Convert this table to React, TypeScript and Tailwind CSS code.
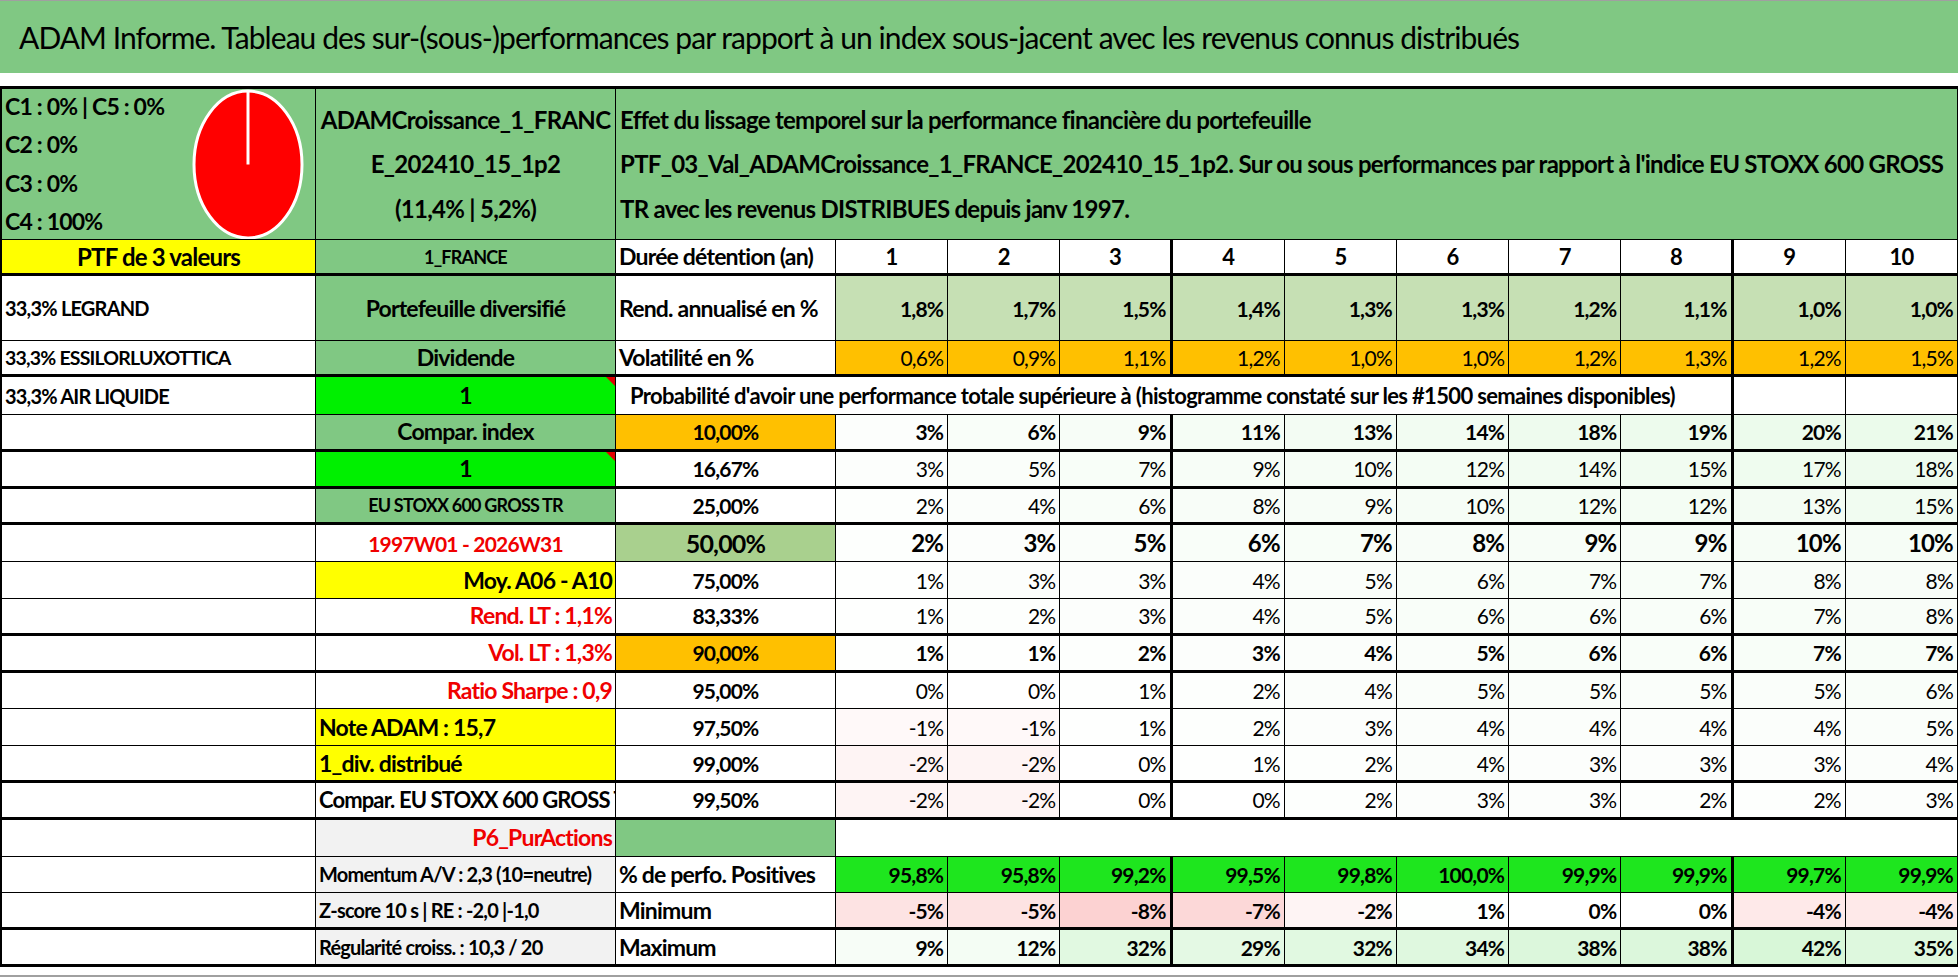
import React from "react";

const years = [1, 2, 3, 4, 5, 6, 7, 8, 9, 10];
const rend = ["1,8%", "1,7%", "1,5%", "1,4%", "1,3%", "1,3%", "1,2%", "1,1%", "1,0%", "1,0%"];
const vol = ["0,6%", "0,9%", "1,1%", "1,2%", "1,0%", "1,0%", "1,2%", "1,3%", "1,2%", "1,5%"];

type ProbRow = {
  seuil: string;
  values: number[];
  bold?: boolean;
  big?: boolean;
  seuilBg?: string;
  left: React.ReactNode;
  leftCls: string;
  thick?: boolean;
};

const green = "bg-[#80c883]";

// light tint from the value, like Excel conditional formatting
function tint(v: number) {
  if (v >= 0) {
    const t = Math.min(v / 45, 1);
    return `rgb(${Math.round(255 - t * 42)},${Math.round(255 - t * 9)},${Math.round(255 - t * 42)})`;
  }
  const t = Math.min(-v / 8, 1);
  return `rgb(${Math.round(255 - t * 3)},${Math.round(255 - t * 45)},${Math.round(255 - t * 45)})`;
}

const probRows: ProbRow[] = [
  { seuil: "10,00%", values: [3, 6, 9, 11, 13, 14, 18, 19, 20, 21], bold: true, seuilBg: "bg-[#ffc000]", left: "Compar. index", leftCls: `${green} justify-center`, thick: true },
  { seuil: "16,67%", values: [3, 5, 7, 9, 10, 12, 14, 15, 17, 18], left: "1", leftCls: "bg-[#00f000] justify-center", thick: true },
  { seuil: "25,00%", values: [2, 4, 6, 8, 9, 10, 12, 12, 13, 15], left: "EU STOXX 600 GROSS TR", leftCls: `${green} justify-center text-[18px]`, thick: true },
  { seuil: "50,00%", values: [2, 3, 5, 6, 7, 8, 9, 9, 10, 10], bold: true, big: true, seuilBg: "bg-[#a9d08e]", left: "1997W01 - 2026W31", leftCls: "justify-center text-[21px] text-[#f00000]" },
  { seuil: "75,00%", values: [1, 3, 3, 4, 5, 6, 7, 7, 8, 8], left: "Moy. A06 - A10", leftCls: "bg-[#ffff00] justify-end pr-[3px]" },
  { seuil: "83,33%", values: [1, 2, 3, 4, 5, 6, 6, 6, 7, 8], left: "Rend. LT : 1,1%", leftCls: "justify-end pr-[3px] text-[#f00000]", thick: true },
  { seuil: "90,00%", values: [1, 1, 2, 3, 4, 5, 6, 6, 7, 7], bold: true, seuilBg: "bg-[#ffc000]", left: "Vol. LT : 1,3%", leftCls: "justify-end pr-[3px] text-[#f00000]", thick: true },
  { seuil: "95,00%", values: [0, 0, 1, 2, 4, 5, 5, 5, 5, 6], left: "Ratio Sharpe : 0,9", leftCls: "justify-end pr-[3px] text-[#f00000]" },
  { seuil: "97,50%", values: [-1, -1, 1, 2, 3, 4, 4, 4, 4, 5], left: "Note ADAM : 15,7", leftCls: "bg-[#ffff00] justify-start pl-[3px]" },
  { seuil: "99,00%", values: [-2, -2, 0, 1, 2, 4, 3, 3, 3, 4], left: "1_div. distribué", leftCls: "bg-[#ffff00] justify-start pl-[3px]", thick: true },
  { seuil: "99,50%", values: [-2, -2, 0, 0, 2, 3, 3, 2, 2, 3], left: "Compar. EU STOXX 600 GROSS TR", leftCls: "justify-start pl-[3px] text-[22px] tracking-[-0.04em]", thick: true },
];

const positives = ["95,8%", "95,8%", "99,2%", "99,5%", "99,8%", "100,0%", "99,9%", "99,9%", "99,7%", "99,9%"];
const minimum = [-5, -5, -8, -7, -2, 1, 0, 0, -4, -4];
const maximum = [9, 12, 32, 29, 32, 34, 38, 38, 42, 35];

const row = "grid grid-cols-[314px_300px_220px_repeat(10,minmax(0,1fr))]";
const cell = "flex items-center overflow-hidden whitespace-nowrap border-r border-black";
// the sheet has a heavier rule after year 3 and year 8
const sep = (i: number) => (i === 2 || i === 7 ? "border-r-[3px]" : "");
const num = "justify-end pr-[4px] text-[21px]";

function Flag() {
  return <span className="absolute right-0 top-0 h-0 w-0 border-l-[9px] border-t-[9px] border-l-transparent border-t-[#e00000]" />;
}

function Pie() {
  return (
    <svg width="112" height="151" viewBox="0 0 112 151" className="shrink-0">
      <ellipse cx="56" cy="75.5" rx="54" ry="73.5" fill="#ff0000" stroke="#ffffff" strokeWidth="3" />
      <line x1="56" y1="2" x2="56" y2="75.5" stroke="#ffffff" strokeWidth="3" />
    </svg>
  );
}

export default function App() {
  return (
    <div className="h-[979px] w-[1958px] overflow-hidden bg-white font-['Lato',sans-serif] text-[23px] font-bold leading-none tracking-[-0.035em] text-black">
      {/* bandeau titre */}
      <div className="border-t border-[#a0a0a0]">
        <div className="flex h-[72px] items-center bg-[#80c883] pl-[19px] text-[30px] font-normal tracking-[-0.031em]">
          ADAM Informe. Tableau des sur-(sous-)performances par rapport à un index sous-jacent avec les revenus connus distribués
        </div>
      </div>
      <div className="h-[13px]" />

      <div className="border-l-2 border-t-[3px] border-black">
        {/* en-tête */}
        <div className={`${row} h-[151px]`}>
          <div className={`${cell} ${green} border-b items-stretch`}>
            <div className="flex flex-col justify-center gap-[15.5px] pl-[3px] text-[23px]">
              <span>C1 : 0% | C5 : 0%</span>
              <span>C2 : 0%</span>
              <span>C3 : 0%</span>
              <span>C4 : 100%</span>
            </div>
            <div className="ml-auto mr-[11px] flex items-center">
              <Pie />
            </div>
          </div>
          <div className={`${cell} ${green} border-b flex-col justify-center gap-[20.5px] text-[24px] tracking-[-0.03em]`}>
            <span>ADAMCroissance_1_FRANC</span>
            <span>E_202410_15_1p2</span>
            <span>(11,4% | 5,2%)</span>
          </div>
          <div className={`${cell} ${green} col-span-11 flex-col items-start justify-center gap-[20.5px] border-b pl-[4px] text-[24px] tracking-[-0.03em]`}>
            <span>Effet du lissage temporel sur la performance financière du portefeuille</span>
            <span>PTF_03_Val_ADAMCroissance_1_FRANCE_202410_15_1p2. Sur ou sous performances par rapport à l'indice EU STOXX 600 GROSS</span>
            <span>TR avec les revenus DISTRIBUES depuis janv 1997.</span>
          </div>
        </div>

        {/* durée */}
        <div className={`${row} h-[36px]`}>
          <div className={`${cell} border-b-[3px] bg-[#ffff00] justify-center text-[24px]`}>PTF de 3 valeurs</div>
          <div className={`${cell} ${green} border-b-[3px] justify-center text-[18px]`}>1_FRANCE</div>
          <div className={`${cell} border-b-[3px] pl-[3px]`}>Durée détention (an)</div>
          {years.map((y, i) => (
            <div key={y} className={`${cell} ${sep(i)} border-b-[3px] justify-center text-[22px]`}>{y}</div>
          ))}
        </div>

        {/* rendement */}
        <div className={`${row} h-[65px]`}>
          <div className={`${cell} border-b pl-[3px] text-[20px]`}>33,3% LEGRAND</div>
          <div className={`${cell} ${green} border-b justify-center`}>Portefeuille diversifié</div>
          <div className={`${cell} border-b pl-[3px]`}>Rend. annualisé en %</div>
          {rend.map((v, i) => (
            <div key={i} className={`${cell} ${sep(i)} ${num} border-b bg-[#c6e0b4]`}>{v}</div>
          ))}
        </div>

        {/* volatilité */}
        <div className={`${row} h-[36px]`}>
          <div className={`${cell} border-b-[3px] pl-[3px] text-[19.5px]`}>33,3% ESSILORLUXOTTICA</div>
          <div className={`${cell} ${green} border-b-[3px] justify-center`}>Dividende</div>
          <div className={`${cell} border-b-[3px] pl-[3px]`}>Volatilité en %</div>
          {vol.map((v, i) => (
            <div key={i} className={`${cell} ${sep(i)} ${num} border-b-[3px] bg-[#ffc000] font-normal`}>{v}</div>
          ))}
        </div>

        {/* probabilité */}
        <div className={`${row} h-[38px]`}>
          <div className={`${cell} border-b pl-[3px] text-[20px]`}>33,3% AIR LIQUIDE</div>
          <div className={`${cell} relative border-b bg-[#00f000] justify-center`}>
            1
            <Flag />
          </div>
          <div className="col-span-9 flex items-center whitespace-nowrap border-b border-r-[3px] border-black pl-[14px] text-[22px] tracking-[-0.03em]">
            Probabilité d'avoir une performance totale supérieure à (histogramme constaté sur les #1500 semaines disponibles)
          </div>
          <div className={`${cell} border-b`} />
          <div className={`${cell} border-b`} />
        </div>

        {probRows.map((r, ri) => {
          const bb = r.thick ? "border-b-[3px]" : "border-b";
          return (
            <div key={r.seuil} className={`${row} h-[36.8px]`}>
              <div className={`${cell} ${bb}`} />
              <div className={`${cell} ${bb} ${r.leftCls} ${ri === 1 ? "relative" : ""}`}>
                {r.left}
                {ri === 1 && <Flag />}
              </div>
              <div className={`${cell} ${bb} ${r.seuilBg ?? ""} justify-center ${r.big ? "text-[25px]" : "text-[21px]"}`}>{r.seuil}</div>
              {r.values.map((v, i) => (
                <div
                  key={i}
                  className={`${cell} ${sep(i)} ${bb} justify-end pr-[4px] ${r.bold ? "" : "font-normal"} ${r.big ? "text-[24px]" : "text-[21px]"}`}
                  style={{ backgroundColor: tint(v) }}
                >
                  {v}%
                </div>
              ))}
            </div>
          );
        })}

        {/* P6 */}
        <div className={`${row} h-[36.8px]`}>
          <div className={`${cell} border-b`} />
          <div className={`${cell} border-b bg-[#f2f2f2] justify-end pr-[3px] text-[#f00000]`}>P6_PurActions</div>
          <div className={`${cell} ${green} border-b`} />
          <div className="col-span-10 border-b border-r border-black" />
        </div>

        {/* positives */}
        <div className={`${row} h-[36.8px]`}>
          <div className={`${cell} border-b`} />
          <div className={`${cell} border-b bg-[#f2f2f2] pl-[3px] text-[20px]`}>Momentum A/V : 2,3 (10=neutre)</div>
          <div className={`${cell} border-b pl-[3px]`}>% de perfo. Positives</div>
          {positives.map((v, i) => (
            <div key={i} className={`${cell} ${sep(i)} ${num} border-b bg-[#1ee61e]`}>{v}</div>
          ))}
        </div>

        {/* minimum */}
        <div className={`${row} h-[36.8px]`}>
          <div className={`${cell} border-b-[3px]`} />
          <div className={`${cell} border-b-[3px] bg-[#f2f2f2] pl-[3px] text-[20px]`}>Z-score 10 s | RE : -2,0 |-1,0</div>
          <div className={`${cell} border-b-[3px] pl-[3px]`}>Minimum</div>
          {minimum.map((v, i) => (
            <div key={i} className={`${cell} ${sep(i)} ${num} border-b-[3px]`} style={{ backgroundColor: tint(v) }}>
              {v}%
            </div>
          ))}
        </div>

        {/* maximum */}
        <div className={`${row} h-[36.8px]`}>
          <div className={`${cell} border-b-[3px]`} />
          <div className={`${cell} border-b-[3px] bg-[#f2f2f2] pl-[3px] text-[20px]`}>Régularité croiss. : 10,3 / 20</div>
          <div className={`${cell} border-b-[3px] pl-[3px]`}>Maximum</div>
          {maximum.map((v, i) => (
            <div key={i} className={`${cell} ${sep(i)} ${num} border-b-[3px]`} style={{ backgroundColor: tint(v) }}>
              {v}%
            </div>
          ))}
        </div>
      </div>
      <div className="mt-[8px] border-t-2 border-[#a0a0a0]" />
    </div>
  );
}
